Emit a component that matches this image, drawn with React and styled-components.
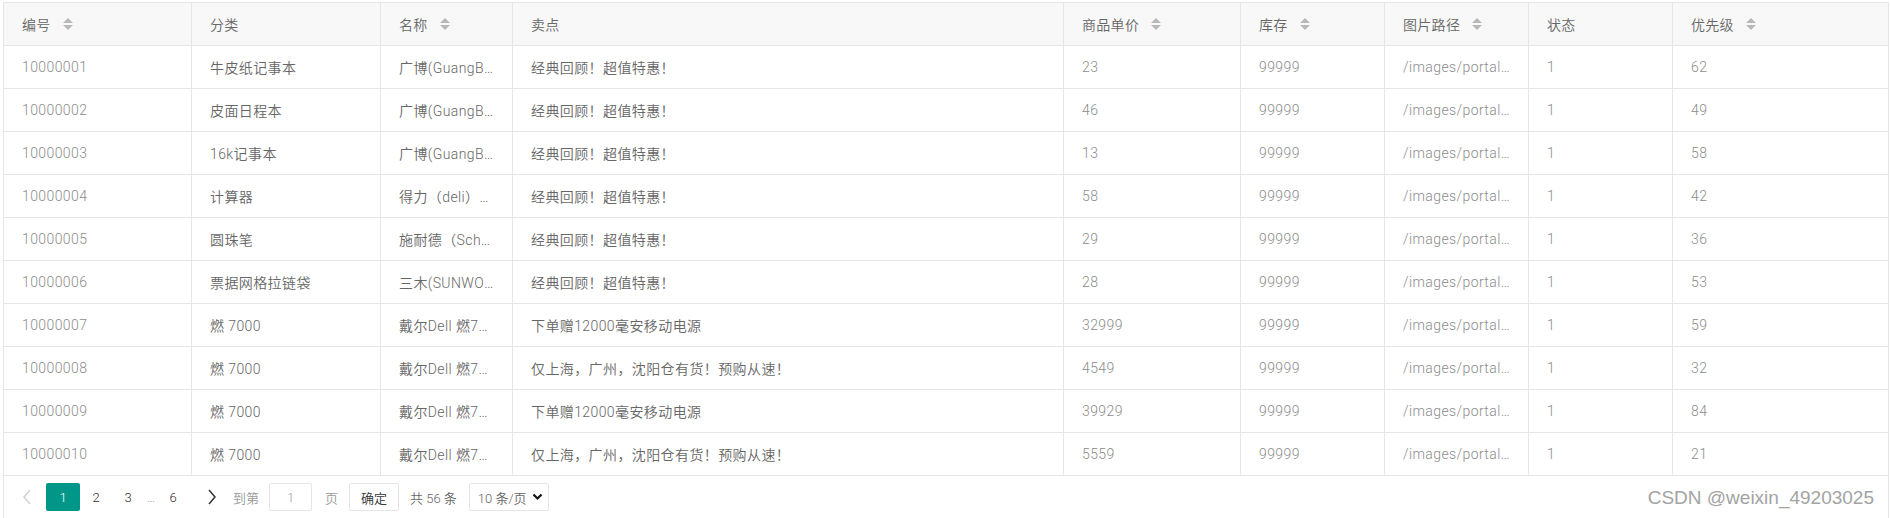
import React from "react";
import styled, { createGlobalStyle } from "styled-components";

const GlobalStyle = createGlobalStyle`
  html, body {
    margin: 0;
    padding: 0;
    background: #fff;
  }
  body {
    font-family: Roboto, "Noto Sans CJK SC", sans-serif;
    font-size: 14px;
    color: #666;
  }
`;

const Page = styled.div`
  position: relative;
  height: 518px;
  overflow: hidden;
`;

const TableBox = styled.div`
  margin: 2px 1px 0 3px;
  border: 1px solid #e6e6e6;
`;

const Table = styled.table`
  width: 100%;
  table-layout: fixed;
  border-collapse: separate;
  border-spacing: 0;
`;

const TH = styled.th`
  box-sizing: border-box;
  height: 43px;
  padding: 0 18px;
  background: #f8f8f8;
  border-right: 1px solid #e6e6e6;
  border-bottom: 1px solid #e6e6e6;
  font-weight: 350;
  letter-spacing: 0.3px;
  text-align: left;
  color: #666;
  white-space: nowrap;

  &:last-child {
    border-right: none;
  }
`;

const HeadInner = styled.span`
  display: inline-flex;
  align-items: center;
`;

const SortIcon = styled.span`
  display: inline-flex;
  flex-direction: column;
  gap: 2px;
  margin-left: 12px;

  &::before,
  &::after {
    content: "";
    width: 0;
    height: 0;
    border-left: 5px solid transparent;
    border-right: 5px solid transparent;
  }
  &::before {
    border-bottom: 5px solid #b8b8b8;
  }
  &::after {
    border-top: 5px solid #b8b8b8;
  }
`;

const TD = styled.td`
  box-sizing: border-box;
  height: 43px;
  padding: 0 18px;
  border-right: 1px solid #e6e6e6;
  border-bottom: 1px solid #e6e6e6;
  white-space: nowrap;
  overflow: hidden;
  text-overflow: ellipsis;
  font-weight: 350;
  letter-spacing: 0.4px;
  color: ${(p) => (p.$light ? "#8c8c8c" : "#666")};

  &:last-child {
    border-right: none;
  }
`;

const Pager = styled.div`
  display: flex;
  align-items: center;
  height: 42px;
  padding: 0 0 0 9px;
  font-size: 13px;
  font-weight: 350;
`;

const Nav = styled.span`
  display: flex;
  align-items: center;
  justify-content: center;
  width: 28px;
  height: 28px;
  margin: ${(p) => p.$margin || "0"};
`;

const PageNum = styled.span`
  display: flex;
  align-items: center;
  justify-content: center;
  width: ${(p) => p.$w || 32}px;
  height: 28px;
  border-radius: 2px;
  color: ${(p) => (p.$active ? "#fff" : "#333")};
  background: ${(p) => (p.$active ? "#009688" : "transparent")};
`;

const Dots = styled.span`
  width: 14px;
  text-align: center;
  color: #999;
`;

const Label = styled.span`
  margin-left: ${(p) => p.$ml}px;
  color: ${(p) => p.$color || "#999"};
`;

const PageInput = styled.input`
  box-sizing: border-box;
  width: 43px;
  height: 28px;
  margin-left: 10px;
  border: 1px solid #e6e6e6;
  border-radius: 2px;
  text-align: center;
  font: inherit;
  color: #999;
  outline: none;
`;

const GoButton = styled.button`
  box-sizing: border-box;
  width: 50px;
  height: 28px;
  margin-left: 11px;
  border: 1px solid #e6e6e6;
  border-radius: 2px;
  background: #fff;
  font: inherit;
  color: #333;
  padding: 0;
`;

const LimitSelect = styled.div`
  box-sizing: border-box;
  display: flex;
  align-items: center;
  justify-content: space-between;
  width: 80px;
  height: 28px;
  margin-left: 12px;
  padding: 0 5px 0 8px;
  border: 1px solid #e6e6e6;
  border-radius: 2px;
  color: #666;
`;

const Watermark = styled.div`
  position: absolute;
  right: 16px;
  top: 487px;
  font-family: "Liberation Sans", Arial, sans-serif;
  font-size: 19px;
  color: #a3a3a3;
  text-shadow: 0 0 1px #fff;
`;

const columns = [
  { key: "id", title: "编号", sort: true, width: 188, light: true },
  { key: "cat", title: "分类", width: 189 },
  { key: "name", title: "名称", sort: true, width: 132 },
  { key: "sell", title: "卖点", width: 551 },
  { key: "price", title: "商品单价", sort: true, width: 177, light: true },
  { key: "stock", title: "库存", sort: true, width: 144, light: true },
  { key: "pic", title: "图片路径", sort: true, width: 144, light: true },
  { key: "status", title: "状态", width: 144, light: true },
  { key: "level", title: "优先级", sort: true, width: 215, light: true },
];

const GB = "广博(GuangBo)";
const A = "经典回顾！超值特惠！";
const B = "下单赠12000毫安移动电源";
const C = "仅上海，广州，沈阳仓有货！预购从速！";

const rows = [
  ["10000001", "牛皮纸记事本", GB + "牛皮纸记事本", A, 23, 62],
  ["10000002", "皮面日程本", GB + "皮面日程本", A, 46, 49],
  ["10000003", "16k记事本", GB + "16k记事本", A, 13, 58],
  ["10000004", "计算器", "得力（deli）计算器", A, 58, 42],
  ["10000005", "圆珠笔", "施耐德（Schneider）圆珠笔", A, 29, 36],
  ["10000006", "票据网格拉链袋", "三木(SUNWOOD)票据网格拉链袋", A, 28, 53],
  ["10000007", "燃 7000", "戴尔Dell 燃7000笔记本", B, 32999, 59],
  ["10000008", "燃 7000", "戴尔Dell 燃7000笔记本", C, 4549, 32],
  ["10000009", "燃 7000", "戴尔Dell 燃7000笔记本", B, 39929, 84],
  ["10000010", "燃 7000", "戴尔Dell 燃7000笔记本", C, 5559, 21],
].map(([id, cat, name, sell, price, level]) => ({
  id,
  cat,
  name,
  sell,
  price,
  stock: 99999,
  pic: "/images/portal/12CH_7000/desktop.jpg",
  status: 1,
  level,
}));

const Chevron = ({ dir, color }) => (
  <svg width="10" height="16" viewBox="0 0 10 16">
    <path
      d={dir === "left" ? "M8 1 L2 8 L8 15" : "M2 1 L8 8 L2 15"}
      fill="none"
      stroke={color}
      strokeWidth="1.5"
    />
  </svg>
);

const App = () => {
  return (
    <Page>
      <GlobalStyle />
      <TableBox>
        <Table>
          <colgroup>
            {columns.map((c) => (
              <col key={c.key} style={{ width: c.width }} />
            ))}
          </colgroup>
          <thead>
            <tr>
              {columns.map((c) => (
                <TH key={c.key}>
                  <HeadInner>
                    {c.title}
                    {c.sort && <SortIcon />}
                  </HeadInner>
                </TH>
              ))}
            </tr>
          </thead>
          <tbody>
            {rows.map((row) => (
              <tr key={row.id}>
                {columns.map((c) => (
                  <TD key={c.key} $light={c.light}>
                    {row[c.key]}
                  </TD>
                ))}
              </tr>
            ))}
          </tbody>
        </Table>
        <Pager>
          <Nav $margin="0 5px 0 0">
            <Chevron dir="left" color="#d2d2d2" />
          </Nav>
          <PageNum $active $w={34}>1</PageNum>
          <PageNum>2</PageNum>
          <PageNum>3</PageNum>
          <Dots>…</Dots>
          <PageNum $w={30}>6</PageNum>
          <Nav $margin="0 0 0 10px">
            <Chevron dir="right" color="#333" />
          </Nav>
          <Label $ml={7}>到第</Label>
          <PageInput defaultValue="1" />
          <Label $ml={13}>页</Label>
          <GoButton>确定</GoButton>
          <Label $ml={11} $color="#666">共 56 条</Label>
          <LimitSelect>
            <span>10 条/页</span>
            <svg width="11" height="8" viewBox="0 0 11 8">
              <path d="M1.5 1.5 L5.5 5.5 L9.5 1.5" fill="none" stroke="#111" strokeWidth="2.2" />
            </svg>
          </LimitSelect>
        </Pager>
      </TableBox>
      <Watermark>CSDN @weixin_49203025</Watermark>
    </Page>
  );
};

export default App;
